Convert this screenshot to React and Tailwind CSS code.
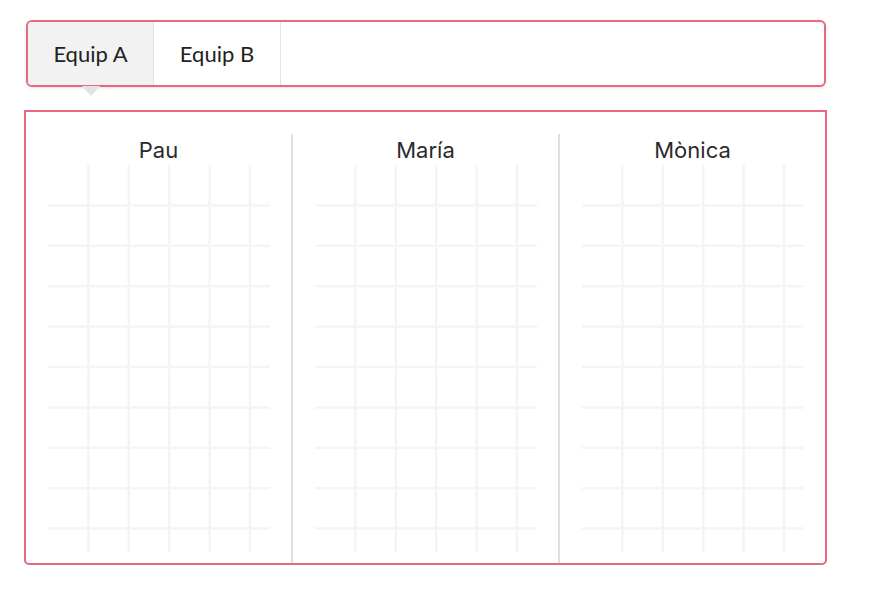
import React from "react";

const people = ["Pau", "María", "Mònica"];

function Grid() {
  const xs = [40.4, 80.8, 121.2, 161.6, 202];
  const ys = [40.4, 80.8, 121.2, 161.6, 202, 242.4, 282.8, 323.2, 363.6];
  return (
    <svg width="222" height="387" viewBox="0 0 222 387" className="block">
      {xs.map((x) => (
        <line key={"v" + x} x1={x} y1="0" x2={x} y2="387" stroke="#f4f4f4" strokeWidth="2.5" />
      ))}
      {ys.map((y) => (
        <line key={"h" + y} x1="0" y1={y} x2="222" y2={y} stroke="#f5f5f5" strokeWidth="2.5" />
      ))}
    </svg>
  );
}

export default function App() {
  return (
    <div className="w-[879px] h-[601px] bg-white pt-[20px] pl-[26px]">
      {/* tabs */}
      <div className="relative w-[800px] h-[67px] rounded-[6px] border-2 border-[#e9677f] bg-white shadow-[0_1px_3px_rgba(0,0,0,0.12)] flex">
        <div
          className="w-[126px] h-full bg-[#f2f2f2] rounded-l-[4px] border-r border-[#e2e2e2] flex items-center justify-center text-[22px] text-[#222]"
          style={{ fontFamily: "Lato, sans-serif" }}
        >
          Equip A
        </div>
        <div
          className="w-[127px] h-full border-r border-[#e2e2e2] flex items-center justify-center text-[22px] text-[#222]"
          style={{ fontFamily: "Lato, sans-serif" }}
        >
          Equip B
        </div>
        {/* arrow */}
        <div className="absolute left-[54px] bottom-[-11px] w-0 h-0 border-l-[9px] border-r-[9px] border-t-[10px] border-l-transparent border-r-transparent border-t-[#e3e3e3]" />
      </div>

      {/* panel */}
      <div className="mt-[23px] ml-[-2px] w-[803px] h-[455px] border-2 border-[#e9677f] rounded-b-[5px] flex">
        {people.map((name, i) => (
          <div
            key={name}
            className={
              "flex-1 mt-[22px] flex flex-col items-center " +
              (i > 0 ? "border-l-2 border-[#e0e0e0]" : "")
            }
          >
            <div
              className="h-[31px] leading-[33px] text-[22px] text-[#2b2b2b]"
              style={{ fontFamily: "Inter, 'Noto Sans', sans-serif" }}
            >
              {name}
            </div>
            <Grid />
          </div>
        ))}
      </div>
    </div>
  );
}
